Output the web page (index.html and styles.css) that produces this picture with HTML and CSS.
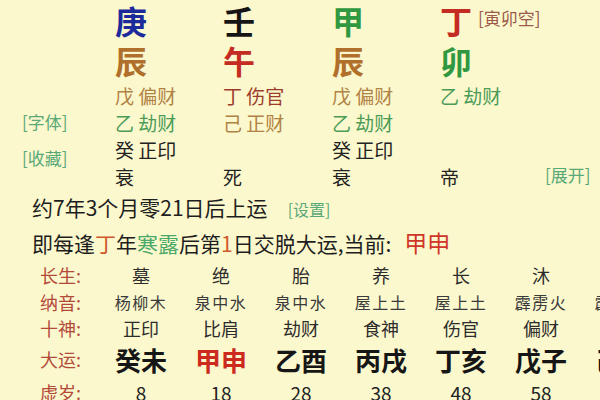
FILE: index.html
```html
<!DOCTYPE html>
<html lang="zh-CN">
<head>
<meta charset="utf-8">
<title>排盘</title>
<link rel="stylesheet" href="styles.css">
</head>
<body>
<div class="page">
  <section class="chart">
    <div class="side">
      <span class="tag">[字体]</span>
      <span class="tag">[收藏]</span>
    </div>
    <div class="pillar">
      <div class="stem c-blue">庚</div>
      <div class="branch c-brown">辰</div>
      <div class="hide c-tan">戊 偏财</div>
      <div class="hide c-green">乙 劫财</div>
      <div class="hide c-dark">癸 正印</div>
      <div class="hide c-dark">衰</div>
    </div>
    <div class="pillar wide">
      <div class="stem c-black">壬</div>
      <div class="branch c-red">午</div>
      <div class="hide c-maroon">丁 伤官</div>
      <div class="hide c-tan">己 正财</div>
      <div class="hide"></div>
      <div class="hide c-dark">死</div>
    </div>
    <div class="pillar">
      <div class="stem c-green2">甲</div>
      <div class="branch c-brown">辰</div>
      <div class="hide c-tan">戊 偏财</div>
      <div class="hide c-green">乙 劫财</div>
      <div class="hide c-dark">癸 正印</div>
      <div class="hide c-dark">衰</div>
    </div>
    <div class="pillar last">
      <div class="stem"><span class="c-red">丁</span><span class="void">[寅卯空]</span></div>
      <div class="branch c-green2">卯</div>
      <div class="hide c-green">乙 劫财</div>
      <div class="hide"></div>
      <div class="hide"></div>
      <div class="hide c-dark">帝</div>
    </div>
    <div class="aside"><span class="tag">[展开]</span></div>
  </section>

  <p class="line">约7年3个月零21日后上运<span class="tag set">[设置]</span></p>
  <p class="line second">即每逢<span class="hl-red">丁</span>年<span class="hl-green">寒露</span>后第<span class="hl-red">1</span>日交脱大运,当前:<span class="cur">甲申</span></p>

  <div class="table">
    <div class="lbl">长生:</div>
    <div class="cell">墓</div><div class="cell">绝</div><div class="cell">胎</div><div class="cell">养</div><div class="cell">长</div><div class="cell">沐</div><div class="cell">冠</div>

    <div class="lbl">纳音:</div>
    <div class="cell nayin">杨柳木</div><div class="cell nayin">泉中水</div><div class="cell nayin">泉中水</div><div class="cell nayin">屋上土</div><div class="cell nayin">屋上土</div><div class="cell nayin">霹雳火</div><div class="cell nayin">霹雳火</div>

    <div class="lbl">十神:</div>
    <div class="cell">正印</div><div class="cell">比肩</div><div class="cell">劫财</div><div class="cell">食神</div><div class="cell">伤官</div><div class="cell">偏财</div><div class="cell">正财</div>

    <div class="lbl">大运:</div>
    <div class="cell dy">癸未</div><div class="cell dy now">甲申</div><div class="cell dy">乙酉</div><div class="cell dy">丙戌</div><div class="cell dy">丁亥</div><div class="cell dy">戊子</div><div class="cell dy">己丑</div>

    <div class="lbl">虚岁:</div>
    <div class="cell age">8</div><div class="cell age">18</div><div class="cell age">28</div><div class="cell age">38</div><div class="cell age">48</div><div class="cell age">58</div><div class="cell age">68</div>
  </div>
</div>
</body>
</html>
```

FILE: styles.css
```css
html, body {
  margin: 0;
  padding: 0;
  background: #fcf8cd;
}
body {
  width: 600px;
  height: 400px;
  overflow: hidden;
  font-family: "Noto Sans CJK SC", "Noto Sans", sans-serif;
  color: #222;
}
.page {
  width: 600px;
  overflow: hidden;
}

/* top chart */
.chart {
  display: flex;
  height: 190px;
}
.side {
  width: 115px;
  box-sizing: border-box;
  padding: 110px 0 0 22px;
  display: flex;
  flex-direction: column;
  gap: 12px;
}
.tag {
  font-size: 17px;
  line-height: 24px;
  color: #58a878;
  white-space: nowrap;
}
.pillar {
  width: 108px;
  display: flex;
  flex-direction: column;
}
.pillar.wide { width: 109px; }
.pillar.last { width: 105px; }
.stem, .branch {
  height: 40px;
  line-height: 40px;
  font-size: 32px;
  font-weight: 700;
  display: flex;
  align-items: center;
  white-space: nowrap;
}
.hide {
  height: 27px;
  line-height: 27px;
  font-size: 19px;
  white-space: nowrap;
}
.branch + .hide { margin-top: 2px; }
.void {
  font-size: 17px;
  font-weight: 400;
  color: #9a5a4c;
  margin-left: 6px;
  margin-top: -4px;
}
.aside {
  flex: 1;
  display: flex;
  align-items: flex-end;
  padding-bottom: 2px;
}
.aside .tag { line-height: 27px; }

.c-blue { color: #1d2a9c; }
.c-black { color: #151515; }
.c-green2 { color: #2f9840; }
.c-red { color: #c42b22; }
.c-brown { color: #b0702c; }
.c-tan { color: #b08244; }
.c-maroon { color: #9c3c2c; }
.c-green { color: #4c9c58; }
.c-dark { color: #222; }

/* text lines */
.line {
  margin: 0;
  padding-left: 32px;
  font-size: 21px;
  line-height: 34px;
  white-space: nowrap;
  color: #1e1e1e;
}
.line.second { line-height: 36px; }
.set {
  font-size: 16px;
  margin-left: 20px;
}
.hl-red { color: #d0592c; }
.hl-green { color: #4aa86a; }
.cur {
  color: #d0362a;
  font-size: 23px;
  margin-left: 13px;
}

/* da yun table */
.table {
  display: grid;
  grid-template-columns: 61px repeat(7, 80px);
  grid-template-rows: 28px 26px 26px 36px 30px;
  padding-left: 40px;
  align-items: center;
}
.lbl {
  font-size: 18px;
  color: #b24a3a;
  white-space: nowrap;
}
.cell {
  text-align: center;
  font-size: 18px;
  color: #2c2c2c;
  white-space: nowrap;
}
.cell.nayin {
  font-size: 16px;
  letter-spacing: 1.5px;
  color: #3a3a3a;
}
.cell.dy {
  font-size: 26px;
  font-weight: 700;
  color: #161616;
}
.cell.dy.now { color: #cc2a1e; }
.cell.age {
  font-size: 19px;
  color: #222;
}
```
